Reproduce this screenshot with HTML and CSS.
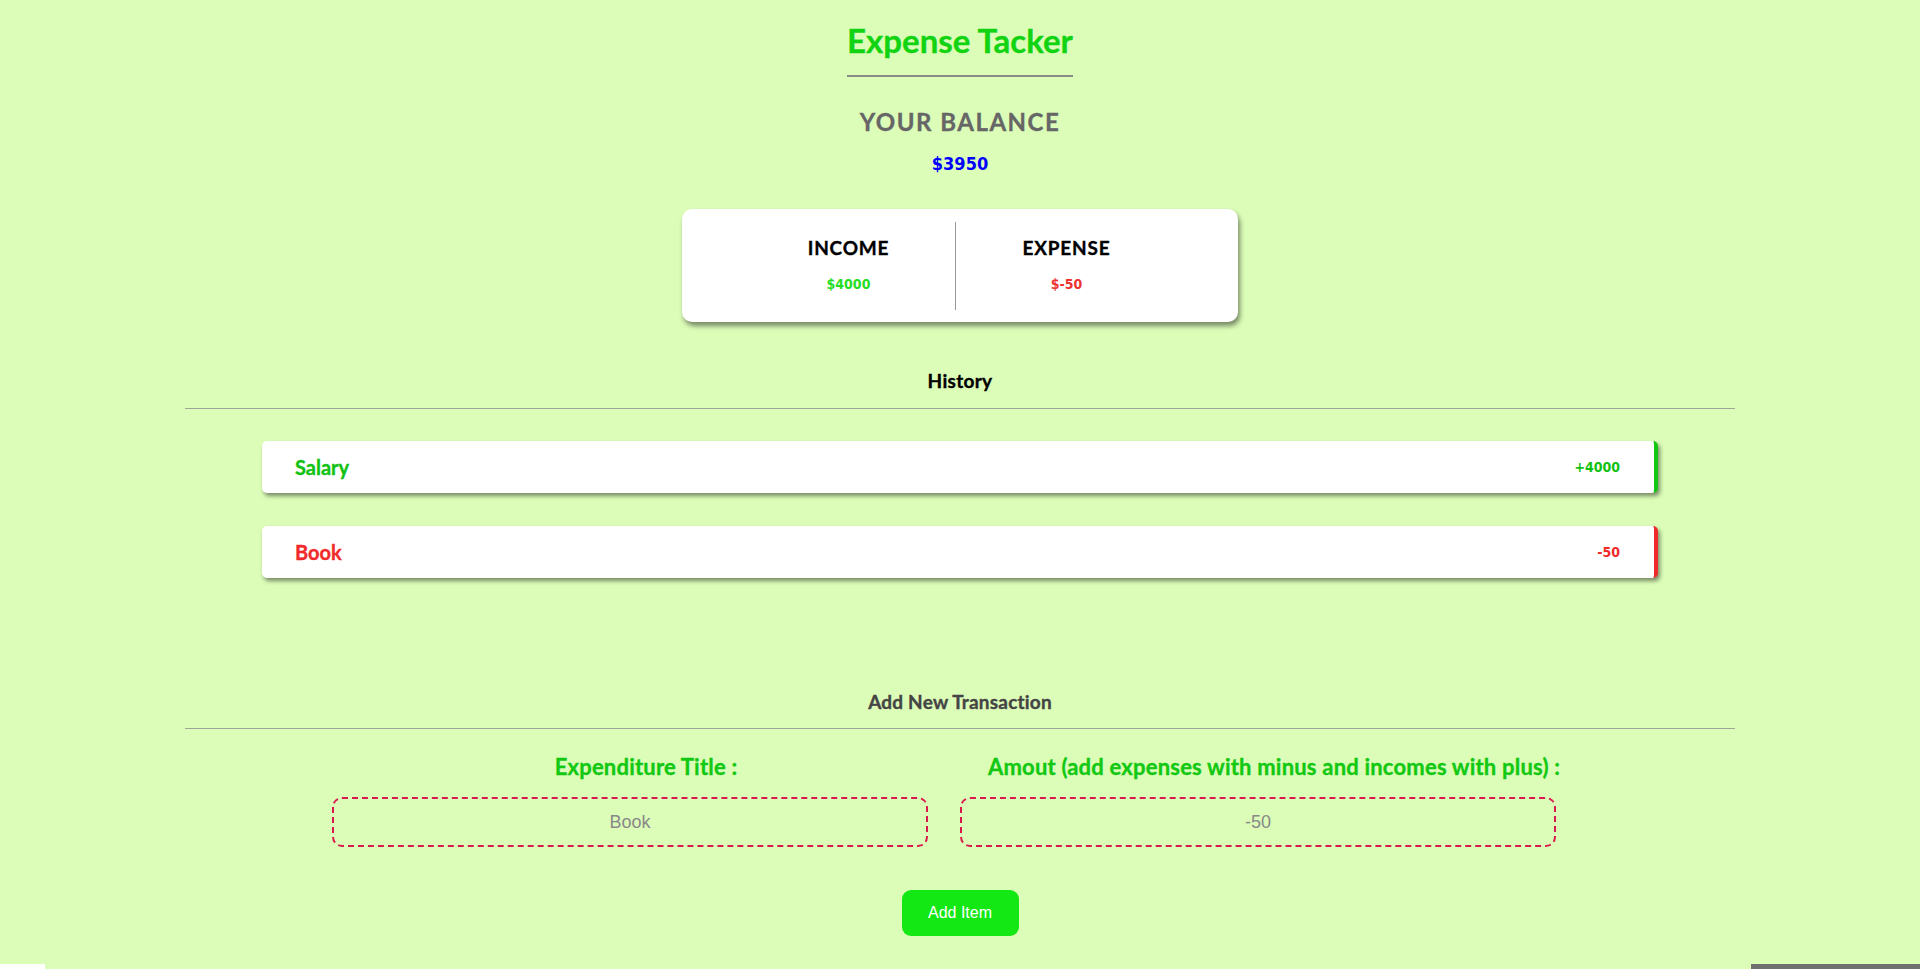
FILE: index.html
```html
<!DOCTYPE html>
<html lang="en">
<head>
<meta charset="utf-8">
<title>Expense Tacker</title>
<link rel="stylesheet" href="styles.css">
</head>
<body>
<div class="page">
  <h1 class="title heavy">Expense Tacker</h1>
  <div class="balance-label heavy">YOUR BALANCE</div>
  <div class="balance num">$3950</div>

  <div class="card">
    <div class="col">
      <div class="col-title heavy">INCOME</div>
      <div class="col-value num plus">$4000</div>
    </div>
    <div class="divider"></div>
    <div class="col col-right">
      <div class="col-title heavy">EXPENSE</div>
      <div class="col-value num minus">$-50</div>
    </div>
  </div>

  <h3 class="section-title heavy">History</h3>
  <div class="rule"></div>

  <ul class="list">
    <li class="item item-plus"><span class="item-name heavy">Salary</span><span class="item-amount num">+4000</span></li>
    <li class="item item-minus"><span class="item-name heavy">Book</span><span class="item-amount num">-50</span></li>
  </ul>

  <h3 class="section-title section-add heavy">Add New Transaction</h3>
  <div class="rule rule-add"></div>

  <div class="form">
    <div class="field">
      <label class="label heavy" for="t">Expenditure Title :</label>
      <input class="input" id="t" type="text" placeholder="Book">
    </div>
    <div class="field">
      <label class="label heavy" for="a">Amout (add expenses with minus and incomes with plus) :</label>
      <input class="input" id="a" type="text" placeholder="-50">
    </div>
  </div>

  <button class="btn" type="button">Add Item</button>
</div>
<div class="strip"><div class="strip-left"></div><div class="strip-mid"></div><div class="strip-right"></div></div>
</body>
</html>
```

FILE: styles.css
```css
html, body {
  margin: 0;
  padding: 0;
}
body {
  background: #ffffff;
  font-family: Lato, "Open Sans", "Noto Sans", sans-serif;
  overflow: hidden;
}
.page {
  height: 964px;
  background: #dcfdb8;
  text-align: center;
  overflow: hidden;
}
.heavy {
  font-weight: 700;
  -webkit-text-stroke: 0.35px currentColor;
}
.num {
  font-family: "DejaVu Sans Condensed", "DejaVu Sans", sans-serif;
  font-stretch: condensed;
}
.title {
  display: inline-block;
  margin: 21px 0 0;
  font-size: 33px;
  line-height: 38px;
  color: #11d311;
  padding-bottom: 16px;
  border-bottom: 2px solid #8a8a8a;
}
.balance-label {
  margin-top: 31px;
  font-size: 24px;
  line-height: 28px;
  color: #666666;
  letter-spacing: 1.5px;
}
.balance {
  margin-top: 16px;
  font-size: 18px;
  line-height: 24px;
  font-weight: 700;
  color: #0000ff;
}
.card {
  width: 556px;
  height: 113px;
  box-sizing: border-box;
  margin: 33px auto 0;
  padding: 13px 0 12px;
  background: #ffffff;
  border-radius: 10px;
  box-shadow: 2px 4px 5px rgba(0, 0, 0, 0.45);
  display: flex;
  justify-content: center;
}
.col {
  width: 212px;
}
.col-right {
  width: 222px;
}
.divider {
  width: 1px;
  background: #999999;
}
.col-title {
  margin-top: 15px;
  font-size: 19px;
  line-height: 22px;
  color: #000000;
  letter-spacing: 0.8px;
}
.col-value {
  margin-top: 17px;
  font-size: 14px;
  line-height: 16px;
  font-weight: 700;
}
.plus { color: #22dd22; }
.minus { color: #ee3333; }
.section-title {
  margin: 48px 0 0;
  font-size: 19px;
  line-height: 22px;
  color: #000000;
  letter-spacing: 0.3px;
}
.section-add {
  margin-top: 113px;
  color: #444444;
  letter-spacing: 0.2px;
}
.rule {
  width: 1550px;
  height: 1px;
  margin: 16px auto 0;
  background: #9aa59a;
}
.rule-add {
  margin-top: 15px;
}
.list {
  list-style: none;
  margin: 32px auto 0;
  padding: 0;
  width: 1396px;
  display: flex;
  flex-direction: column;
  gap: 33px;
}
.item {
  height: 52px;
  box-sizing: border-box;
  display: flex;
  align-items: center;
  justify-content: space-between;
  padding: 0 34px 0 33px;
  background: #ffffff;
  border-radius: 5px;
  box-shadow: 2px 3px 4px rgba(0, 0, 0, 0.45);
}
.item-plus { border-right: 4px solid #12c612; }
.item-minus { border-right: 4px solid #f02a2a; }
.item-name {
  font-size: 20px;
}
.item-plus .item-name, .item-plus .item-amount { color: #12c212; }
.item-minus .item-name, .item-minus .item-amount { color: #f02a2a; }
.item-amount {
  font-size: 14px;
  font-weight: 700;
}
.form {
  width: 1256px;
  margin: 25px auto 0;
  display: grid;
  grid-template-columns: 628px 628px;
}
.field {
  display: flex;
  flex-direction: column;
  align-items: flex-start;
}
.label {
  align-self: stretch;
  text-align: center;
  font-size: 22px;
  line-height: 26px;
  color: #12c812;
  letter-spacing: 0.2px;
  white-space: nowrap;
}
.input {
  margin-top: 17px;
  width: 596px;
  height: 50px;
  box-sizing: border-box;
  border: 2px dashed #d8194e;
  border-radius: 10px;
  background: transparent;
  text-align: center;
  font-family: "Liberation Sans", Arial, sans-serif;
  font-size: 18px;
  color: #555555;
  outline: none;
}
.input::placeholder {
  color: #888888;
}
.btn {
  display: block;
  margin: 43px auto 0;
  width: 117px;
  height: 46px;
  border: none;
  border-radius: 9px;
  background: #14e814;
  color: #ffffff;
  font-family: "Liberation Sans", Arial, sans-serif;
  font-size: 16px;
  cursor: pointer;
}
.strip {
  height: 5px;
  display: flex;
}
.strip-left {
  width: 45px;
  background: #ffffff;
}
.strip-mid {
  flex: 1;
  background: #dcfdb8;
}
.strip-right {
  width: 169px;
  background: #6f6f6f;
}
```
